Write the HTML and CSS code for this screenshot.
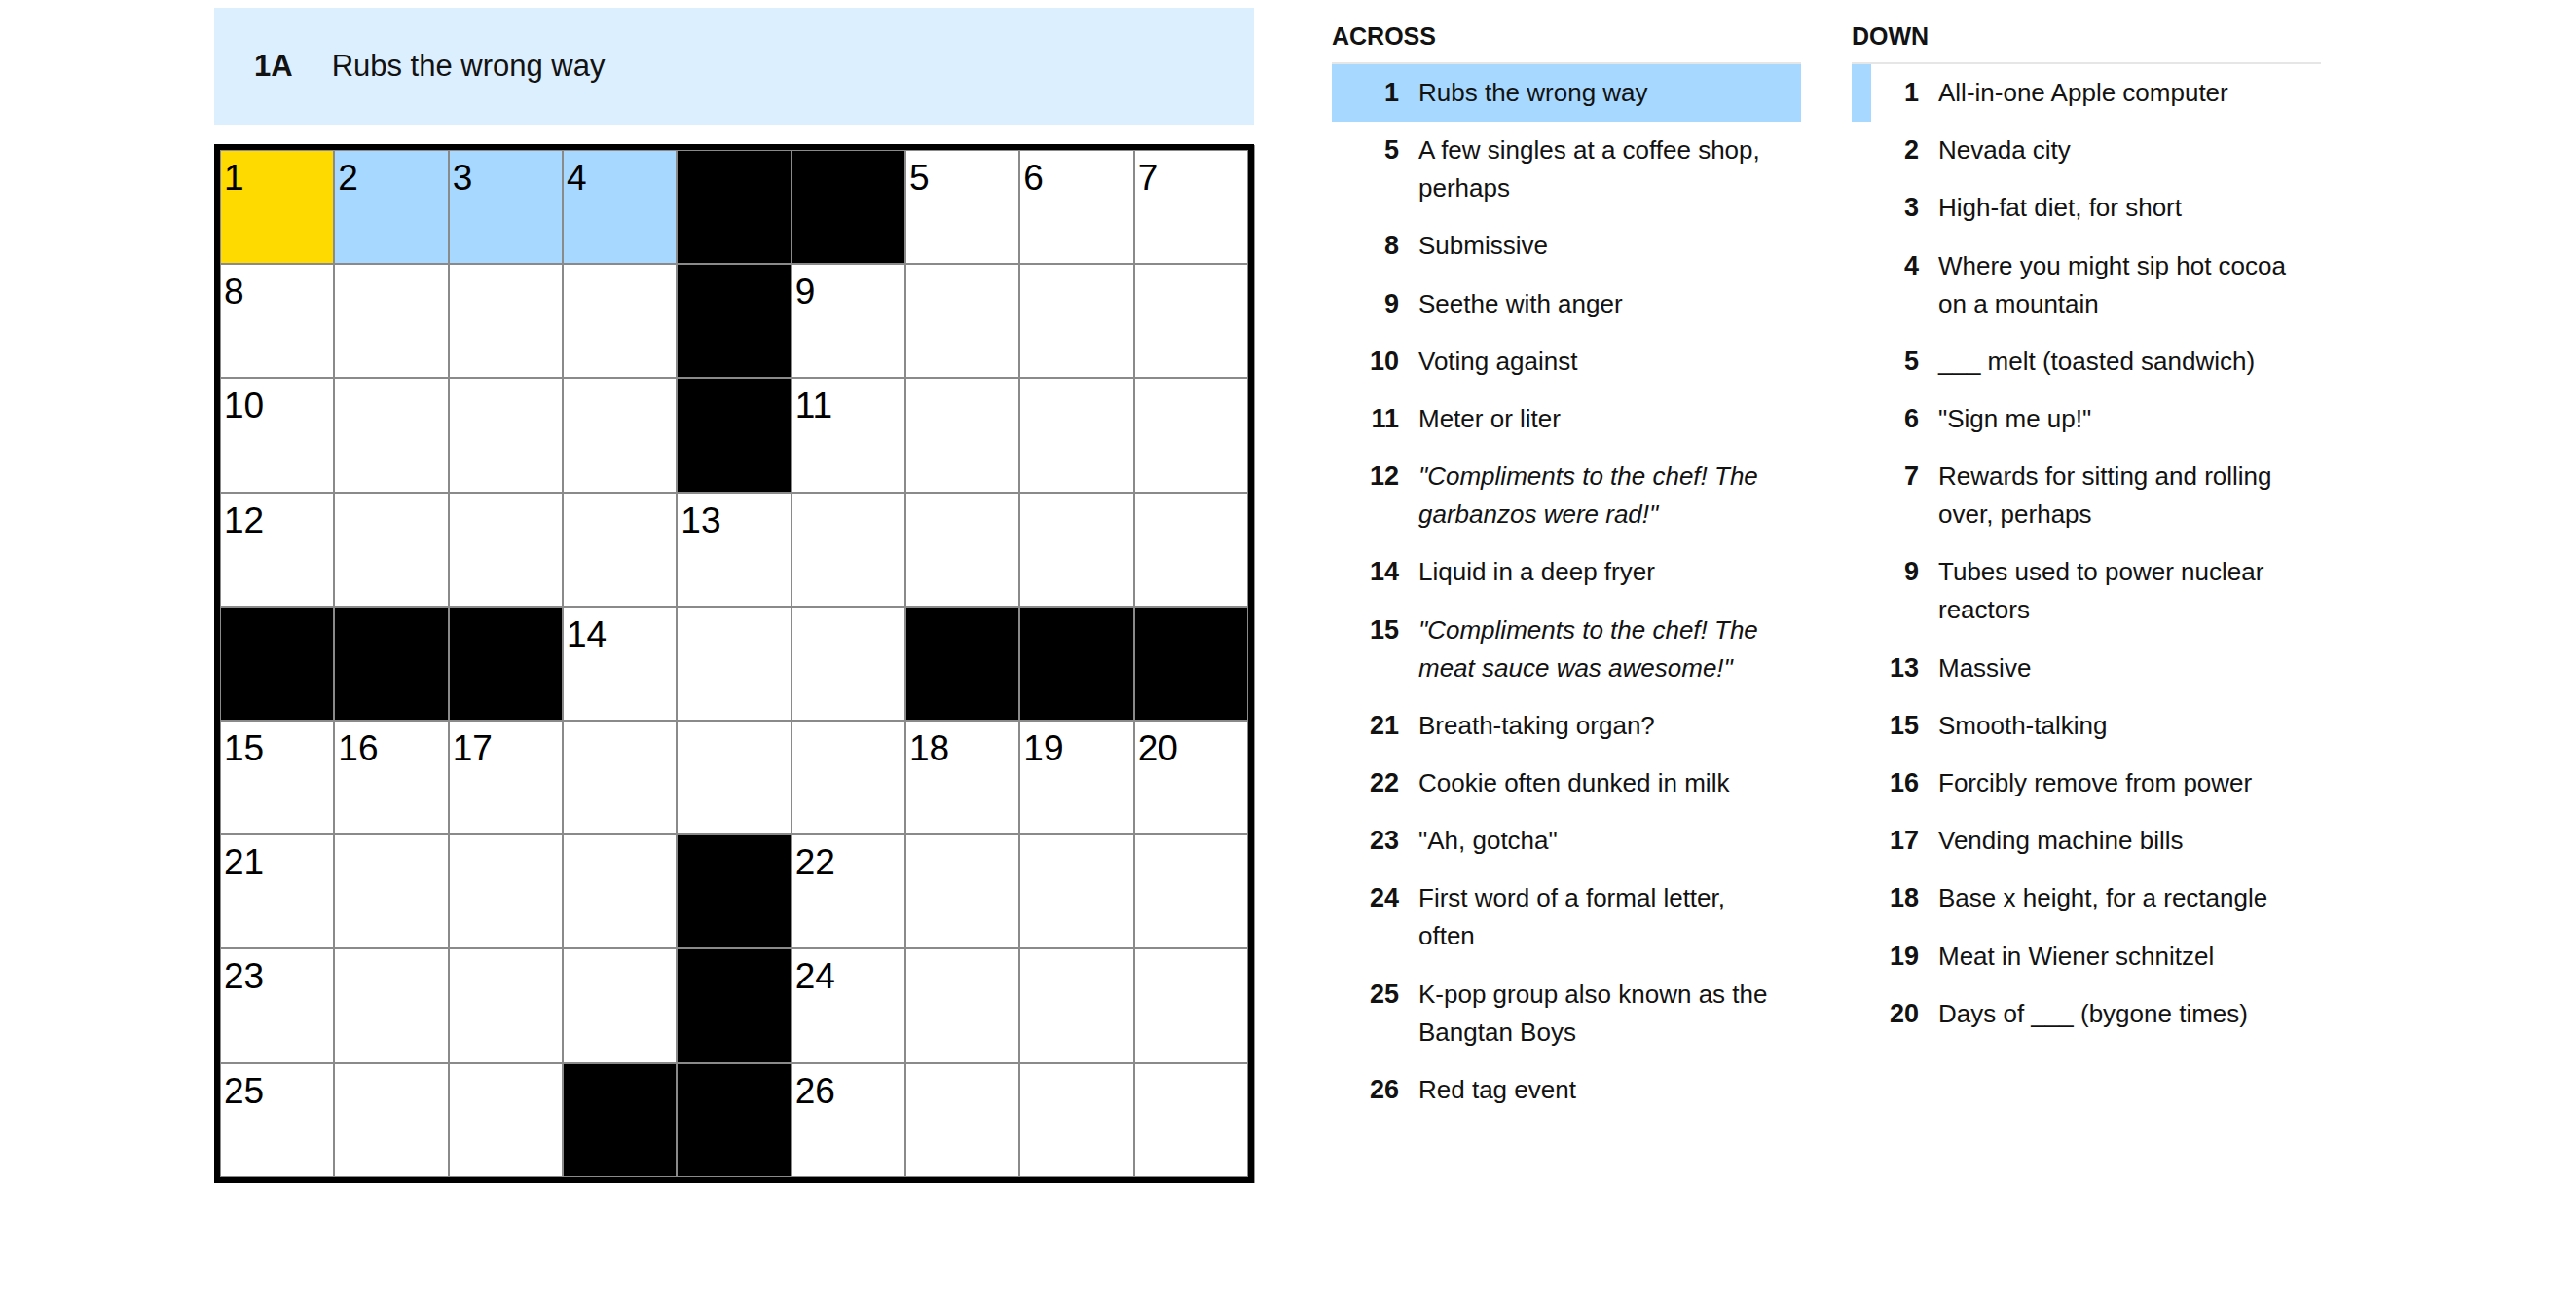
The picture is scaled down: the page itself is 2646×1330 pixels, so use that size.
FILE: index.html
```html
<!DOCTYPE html>
<html lang="en">
<head>
  <meta charset="UTF-8">
  <meta name="viewport" content="width=device-width, initial-scale=1.0">
  <title>Mini Crossword</title>
  <link rel="stylesheet" href="styles.css">
</head>
<body>
  <main class="game">

    <section class="board">
      <div class="clue-bar">
        <span class="clue-bar-label">1A</span>
        <span class="clue-bar-text">Rubs the wrong way</span>
      </div>

      <div class="grid">
        <!-- row 1 -->
        <div class="cell selected"><span class="num">1</span></div>
        <div class="cell hl"><span class="num">2</span></div>
        <div class="cell hl"><span class="num">3</span></div>
        <div class="cell hl"><span class="num">4</span></div>
        <div class="cell block"></div>
        <div class="cell block"></div>
        <div class="cell"><span class="num">5</span></div>
        <div class="cell"><span class="num">6</span></div>
        <div class="cell"><span class="num">7</span></div>
        <!-- row 2 -->
        <div class="cell"><span class="num">8</span></div>
        <div class="cell"></div>
        <div class="cell"></div>
        <div class="cell"></div>
        <div class="cell block"></div>
        <div class="cell"><span class="num">9</span></div>
        <div class="cell"></div>
        <div class="cell"></div>
        <div class="cell"></div>
        <!-- row 3 -->
        <div class="cell"><span class="num">10</span></div>
        <div class="cell"></div>
        <div class="cell"></div>
        <div class="cell"></div>
        <div class="cell block"></div>
        <div class="cell"><span class="num">11</span></div>
        <div class="cell"></div>
        <div class="cell"></div>
        <div class="cell"></div>
        <!-- row 4 -->
        <div class="cell"><span class="num">12</span></div>
        <div class="cell"></div>
        <div class="cell"></div>
        <div class="cell"></div>
        <div class="cell"><span class="num">13</span></div>
        <div class="cell"></div>
        <div class="cell"></div>
        <div class="cell"></div>
        <div class="cell"></div>
        <!-- row 5 -->
        <div class="cell block"></div>
        <div class="cell block"></div>
        <div class="cell block"></div>
        <div class="cell"><span class="num">14</span></div>
        <div class="cell"></div>
        <div class="cell"></div>
        <div class="cell block"></div>
        <div class="cell block"></div>
        <div class="cell block"></div>
        <!-- row 6 -->
        <div class="cell"><span class="num">15</span></div>
        <div class="cell"><span class="num">16</span></div>
        <div class="cell"><span class="num">17</span></div>
        <div class="cell"></div>
        <div class="cell"></div>
        <div class="cell"></div>
        <div class="cell"><span class="num">18</span></div>
        <div class="cell"><span class="num">19</span></div>
        <div class="cell"><span class="num">20</span></div>
        <!-- row 7 -->
        <div class="cell"><span class="num">21</span></div>
        <div class="cell"></div>
        <div class="cell"></div>
        <div class="cell"></div>
        <div class="cell block"></div>
        <div class="cell"><span class="num">22</span></div>
        <div class="cell"></div>
        <div class="cell"></div>
        <div class="cell"></div>
        <!-- row 8 -->
        <div class="cell"><span class="num">23</span></div>
        <div class="cell"></div>
        <div class="cell"></div>
        <div class="cell"></div>
        <div class="cell block"></div>
        <div class="cell"><span class="num">24</span></div>
        <div class="cell"></div>
        <div class="cell"></div>
        <div class="cell"></div>
        <!-- row 9 -->
        <div class="cell"><span class="num">25</span></div>
        <div class="cell"></div>
        <div class="cell"></div>
        <div class="cell block"></div>
        <div class="cell block"></div>
        <div class="cell"><span class="num">26</span></div>
        <div class="cell"></div>
        <div class="cell"></div>
        <div class="cell"></div>
      </div>
    </section>

    <section class="clues">
      <div class="clue-list">
        <h3 class="clue-title">ACROSS</h3>
        <ol>
          <li class="clue selected"><span class="clue-num">1</span><span class="clue-text">Rubs the wrong way</span></li>
          <li class="clue"><span class="clue-num">5</span><span class="clue-text">A few singles at a coffee shop, perhaps</span></li>
          <li class="clue"><span class="clue-num">8</span><span class="clue-text">Submissive</span></li>
          <li class="clue"><span class="clue-num">9</span><span class="clue-text">Seethe with anger</span></li>
          <li class="clue"><span class="clue-num">10</span><span class="clue-text">Voting against</span></li>
          <li class="clue"><span class="clue-num">11</span><span class="clue-text">Meter or liter</span></li>
          <li class="clue"><span class="clue-num">12</span><span class="clue-text"><em>"Compliments to the chef! The garbanzos were rad!"</em></span></li>
          <li class="clue"><span class="clue-num">14</span><span class="clue-text">Liquid in a deep fryer</span></li>
          <li class="clue"><span class="clue-num">15</span><span class="clue-text"><em>"Compliments to the chef! The meat sauce was awesome!"</em></span></li>
          <li class="clue"><span class="clue-num">21</span><span class="clue-text">Breath-taking organ?</span></li>
          <li class="clue"><span class="clue-num">22</span><span class="clue-text">Cookie often dunked in milk</span></li>
          <li class="clue"><span class="clue-num">23</span><span class="clue-text">"Ah, gotcha"</span></li>
          <li class="clue"><span class="clue-num">24</span><span class="clue-text">First word of a formal letter, often</span></li>
          <li class="clue"><span class="clue-num">25</span><span class="clue-text">K-pop group also known as the Bangtan Boys</span></li>
          <li class="clue"><span class="clue-num">26</span><span class="clue-text">Red tag event</span></li>
        </ol>
      </div>

      <div class="clue-list">
        <h3 class="clue-title">DOWN</h3>
        <ol>
          <li class="clue cross"><span class="clue-num">1</span><span class="clue-text">All-in-one Apple computer</span></li>
          <li class="clue"><span class="clue-num">2</span><span class="clue-text">Nevada city</span></li>
          <li class="clue"><span class="clue-num">3</span><span class="clue-text">High-fat diet, for short</span></li>
          <li class="clue"><span class="clue-num">4</span><span class="clue-text">Where you might sip hot cocoa on a mountain</span></li>
          <li class="clue"><span class="clue-num">5</span><span class="clue-text">___ melt (toasted sandwich)</span></li>
          <li class="clue"><span class="clue-num">6</span><span class="clue-text">"Sign me up!"</span></li>
          <li class="clue"><span class="clue-num">7</span><span class="clue-text">Rewards for sitting and rolling over, perhaps</span></li>
          <li class="clue"><span class="clue-num">9</span><span class="clue-text">Tubes used to power nuclear reactors</span></li>
          <li class="clue"><span class="clue-num">13</span><span class="clue-text">Massive</span></li>
          <li class="clue"><span class="clue-num">15</span><span class="clue-text">Smooth-talking</span></li>
          <li class="clue"><span class="clue-num">16</span><span class="clue-text">Forcibly remove from power</span></li>
          <li class="clue"><span class="clue-num">17</span><span class="clue-text">Vending machine bills</span></li>
          <li class="clue"><span class="clue-num">18</span><span class="clue-text">Base x height, for a rectangle</span></li>
          <li class="clue"><span class="clue-num">19</span><span class="clue-text">Meat in Wiener schnitzel</span></li>
          <li class="clue"><span class="clue-num">20</span><span class="clue-text">Days of ___ (bygone times)</span></li>
        </ol>
      </div>
    </section>

  </main>
</body>
</html>
```

FILE: styles.css
```css
body {
  font-family: "Liberation Sans", Arial, sans-serif;
  margin: 0;
  padding: 0;
  color: #121212;
  background: #fff;
}

.game {
  display: flex;
  align-items: flex-start;
  gap: 80px;
  padding: 8px 0 0 220px;
}

/* left side: current clue + puzzle grid */
.board {
  width: 1068px;
}

.clue-bar {
  display: flex;
  align-items: center;
  height: 120px;
  padding-left: 41px;
  background-color: #dcefff;
  font-size: 31px;
  line-height: 38px;
}

.clue-bar-label {
  font-weight: bold;
  margin-right: 40px;
}

.grid {
  display: grid;
  grid-template-columns: repeat(9, 1fr);
  gap: 2px;
  padding: 1px;
  margin-top: 20px;
  border: 6px solid #000;
  background-color: #8a8a8a;
  box-shadow: 1px 1px 0 #999;
}

.cell {
  height: 115.2px;
  background-color: #fff;
  font-size: 37px;
  line-height: 37px;
  color: #000;
}

.cell .num {
  display: block;
  padding: 9px 0 0 3px;
}

.cell.block {
  background-color: #000;
}

.cell.selected {
  background-color: #ffda00;
}

.cell.hl {
  background-color: #a7d8ff;
}

/* right side: clue lists */
.clues {
  display: flex;
  gap: 52px;
}

.clue-list {
  width: 482px;
}

.clue-title {
  margin: 0;
  padding: 14px 0 12px;
  font-size: 25px;
  line-height: 30px;
  font-weight: bold;
}

.clue-list ol {
  list-style: none;
  margin: 0;
  padding: 0;
  border-top: 2px solid #e6e6e6;
}

.clue {
  display: flex;
  padding: 10.1px 15px 10.1px 0;
  font-size: 26px;
  line-height: 39px;
}

.clue-num {
  flex-shrink: 0;
  width: 69px;
  text-align: right;
  font-size: 27px;
  font-weight: bold;
  margin-right: 20px;
}

.clue.selected {
  background-color: #a7d8ff;
}

.clue.cross {
  box-shadow: inset 20px 0 0 #a7d8ff;
}
```
